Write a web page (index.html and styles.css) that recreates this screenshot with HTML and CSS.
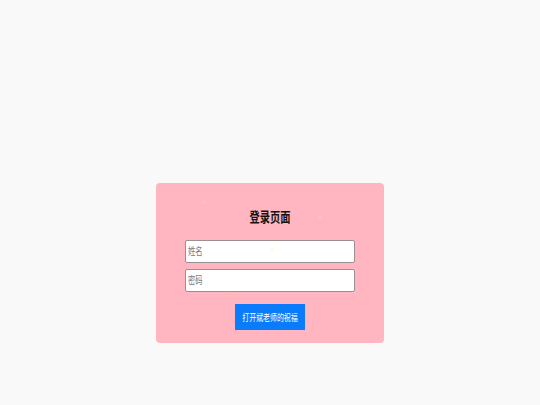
FILE: index.html
```html
<!DOCTYPE html>
<html lang="zh">
<head>
<meta charset="utf-8">
<title>登录页面</title>
<link rel="stylesheet" href="styles.css">
</head>
<body>
<div class="card">
  <h2 class="title"><span class="sx">登录页面</span></h2>
  <label class="field">
    <input type="text" class="input">
    <span class="ph"><span class="sx">姓名</span></span>
  </label>
  <label class="field">
    <input type="password" class="input">
    <span class="ph"><span class="sx">密码</span></span>
  </label>
  <div class="actions">
    <button class="btn"><span class="sx">打开斌老师的祝福</span></button>
  </div>
  <span class="dot d1"></span>
  <span class="dot d2"></span>
  <span class="dot d3"></span>
  <span class="dot d4"></span>
</div>
</body>
</html>
```

FILE: styles.css
```css
html, body {
  margin: 0;
  padding: 0;
}
body {
  background: #f9f9f9;
  font-family: "Liberation Sans", "Noto Sans CJK SC", sans-serif;
  height: 405px;
  overflow: hidden;
}
.card {
  position: relative;
  box-sizing: border-box;
  width: 228px;
  height: 160px;
  margin: 183px auto 0;
  background: #ffb6c1;
  border-radius: 4px;
  padding: 24px 29px 13px;
  display: flex;
  flex-direction: column;
  align-items: center;
}
.sx {
  display: inline-block;
  transform: scaleX(0.73);
  transform-origin: center;
  white-space: nowrap;
}
.title {
  margin: 0 0 13px;
  height: 20px;
  line-height: 20px;
  font-size: 14px;
  font-weight: bold;
  color: #111;
  text-align: center;
}
.field {
  position: relative;
  display: block;
  width: 170px;
  height: 23px;
  margin-bottom: 6px;
}
.input {
  box-sizing: border-box;
  width: 100%;
  height: 100%;
  margin: 0;
  border: 1px solid #9a8f91;
  border-radius: 2px;
  background: #fff;
  outline: none;
  padding: 0 4px;
}
.ph {
  position: absolute;
  left: 3px;
  top: 0;
  height: 23px;
  line-height: 23px;
  font-size: 10px;
  color: #777;
  pointer-events: none;
}
.ph .sx {
  transform-origin: left center;
}
.actions {
  margin-top: 6px;
  display: flex;
  justify-content: center;
}
.btn {
  width: 70px;
  height: 26px;
  border: none;
  border-radius: 0;
  background: #0a7bfa;
  color: #fff;
  font-family: inherit;
  font-size: 9.5px;
  padding: 0;
  display: flex;
  align-items: center;
  justify-content: center;
}
.dot {
  position: absolute;
  width: 4px;
  height: 4px;
  border-radius: 50%;
  opacity: 0.35;
}
.d1 { left: 114px; top: 64px; background: #fff5b0; }
.d2 { left: 70px; top: 111px; background: #ffc89a; }
.d3 { left: 46px; top: 17px; background: #ffd6a0; }
.d4 { left: 162px; top: 32px; background: #ffd6a0; }
```
